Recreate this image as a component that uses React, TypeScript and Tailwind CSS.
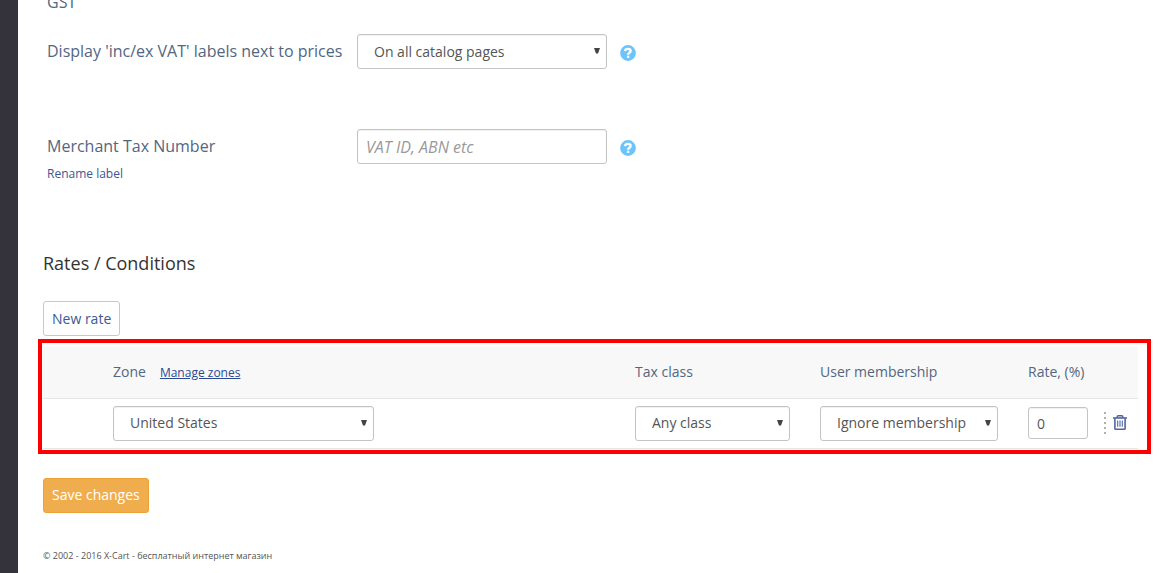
import React from "react";

function Caret() {
  return (
    <svg className="pointer-events-none absolute top-3.5 right-1.5 h-1.5 w-[7px] fill-[#444]" viewBox="0 0 7 6" aria-hidden="true">
      <path d="M0 0H6L4 5.5H2Z" />
    </svg>
  );
}

function Select({ id, label, value, className }: { id: string; label?: string; value: string; className: string }) {
  return (
    <div className={"relative " + className}>
      <select
        id={id}
        aria-label={label}
        className="block h-[35px] w-full appearance-none rounded-[3px] border border-[#c4c4c4] bg-white pr-5 pl-4 text-sm text-[#555] shadow-[inset_0_1px_1px_rgba(0,0,0,0.06)]"
      >
        <option>{value}</option>
      </select>
      <Caret />
    </div>
  );
}

function Help() {
  return (
    <button type="button" aria-label="Help" className="ml-[13px] shrink-0 pt-0.5">
      <svg className="block size-4" viewBox="0 0 16 16" aria-hidden="true">
        <circle cx="8" cy="8" r="7.9" fill="#6dc4fb" />
        <path d="M5 6.2C5.2 4.5 6.3 3.9 7.9 3.9C9.6 3.9 10.6 4.8 10.6 6C10.6 7.8 8.1 7.7 8.1 9.8" fill="none" stroke="#fff" strokeWidth="2.4" />
        <rect x="6.9" y="10.7" width="2.4" height="2.2" fill="#fff" />
      </svg>
    </button>
  );
}

function TrashIcon() {
  return (
    <svg className="block h-[15px] w-3.5" viewBox="0 0 14 15" fill="none" stroke="#5065a0" aria-hidden="true">
      <path d="M0 3H14" strokeWidth="1.6" />
      <path d="M4.3 3V1.6Q4.3 0.8 5.1 0.8H8.9Q9.7 0.8 9.7 1.6V3" strokeWidth="1.5" />
      <path d="M1.9 3.5V13.4Q1.9 14.2 2.7 14.2H11.3Q12.1 14.2 12.1 13.4V3.5" strokeWidth="1.6" />
      <path d="M4.7 5.5V11.8M7 5.5V11.8M9.3 5.5V11.8" strokeWidth="1.1" />
    </svg>
  );
}

export default function App() {
  return (
    <div className="flex h-screen overflow-hidden bg-white font-['Open_Sans',sans-serif] text-[#53667f]">
      <aside className="w-[18px] shrink-0 bg-[#34333c]" />
      <main className="min-w-0 flex-1 pr-2.5 pl-5">
        <section className="pl-[9px] text-base leading-[22px]">
          <p className="-mt-[9px]">GST</p>
          <div className="mt-[21px] flex items-center">
            <label htmlFor="vat-labels" className="w-[310px] shrink-0 pb-0.5">
              Display 'inc/ex VAT' labels next to prices
            </label>
            <Select id="vat-labels" value="On all catalog pages" className="w-[250px]" />
            <Help />
          </div>
          <div className="mt-[60px] flex items-center">
            <label htmlFor="tax-number" className="w-[310px] shrink-0 pb-0.5">
              Merchant Tax Number
            </label>
            <input
              id="tax-number"
              type="text"
              placeholder="VAT ID, ABN etc"
              className="h-[35px] w-[250px] rounded-[3px] border border-[#c4c4c4] px-2 text-base text-[#555] shadow-[inset_0_1px_1px_rgba(0,0,0,0.06)] placeholder:text-[#999] placeholder:italic"
            />
            <Help />
          </div>
          <a href="#rename" className="block w-fit text-xs leading-5 text-[#3d5590]">
            Rename label
          </a>
        </section>

        <h2 className="mt-[67px] pl-[5px] text-lg leading-6 text-[#333]">Rates / Conditions</h2>
        <button type="button" className="mt-[26px] ml-[5px] block h-[35px] rounded-[3px] border border-[#c9c9c9] px-2 text-sm text-[#3a5a94]">
          New rate
        </button>

        <div className="mt-[3px] border-4 border-[#ff0000] pt-[3px] pr-[9px] pb-px pl-px">
          <table className="w-full table-fixed border-collapse text-left text-sm">
            <colgroup>
              <col className="w-[70px]" />
              <col />
              <col className="w-[185px]" />
              <col className="w-[208px]" />
              <col className="w-[76px]" />
              <col className="w-[34px]" />
            </colgroup>
            <thead className="bg-[#f8f8f8]">
              <tr className="h-[52px] border-b border-[#e6e6e6]">
                <th />
                <th className="font-normal">
                  Zone
                  <a href="#zones" className="ml-3.5 text-xs text-[#2a4a94] underline">
                    Manage zones
                  </a>
                </th>
                <th className="font-normal">Tax class</th>
                <th className="font-normal">User membership</th>
                <th className="font-normal">Rate, (%)</th>
                <th />
              </tr>
            </thead>
            <tbody>
              <tr className="h-[50px] border-b border-[#e6e6e6]">
                <td />
                <td>
                  <Select id="zone" label="Zone" value="United States" className="w-1/2" />
                </td>
                <td>
                  <Select id="tax-class" label="Tax class" value="Any class" className="w-[155px]" />
                </td>
                <td>
                  <Select id="membership" label="User membership" value="Ignore membership" className="w-[178px]" />
                </td>
                <td>
                  <input
                    type="text"
                    aria-label="Rate, (%)"
                    defaultValue="0"
                    className="block h-8 w-[60px] rounded-[3px] border border-[#c4c4c4] px-2 text-sm text-[#555] shadow-[inset_0_1px_1px_rgba(0,0,0,0.06)]"
                  />
                </td>
                <td>
                  <div className="flex items-center gap-[7px]">
                    <svg className="h-[22px] w-0.5" viewBox="0 0 2 22" aria-hidden="true">
                      <path d="M1 0V22" stroke="#b0b0b0" strokeWidth="2" strokeDasharray="2 3" />
                    </svg>
                    <button type="button" aria-label="Remove rate" className="pb-0.5">
                      <TrashIcon />
                    </button>
                  </div>
                </td>
              </tr>
            </tbody>
          </table>
        </div>

        <button type="button" className="mt-6 ml-[5px] block h-[35px] rounded-[3px] border border-[#eea236] bg-[#f0ad4e] px-2 text-sm text-white">
          Save changes
        </button>
        <footer className="mt-[37px] pl-[5px] text-[9px] leading-3 text-[#555]">© 2002 - 2016 X-Cart - бесплатный интернет магазин</footer>
      </main>
    </div>
  );
}
